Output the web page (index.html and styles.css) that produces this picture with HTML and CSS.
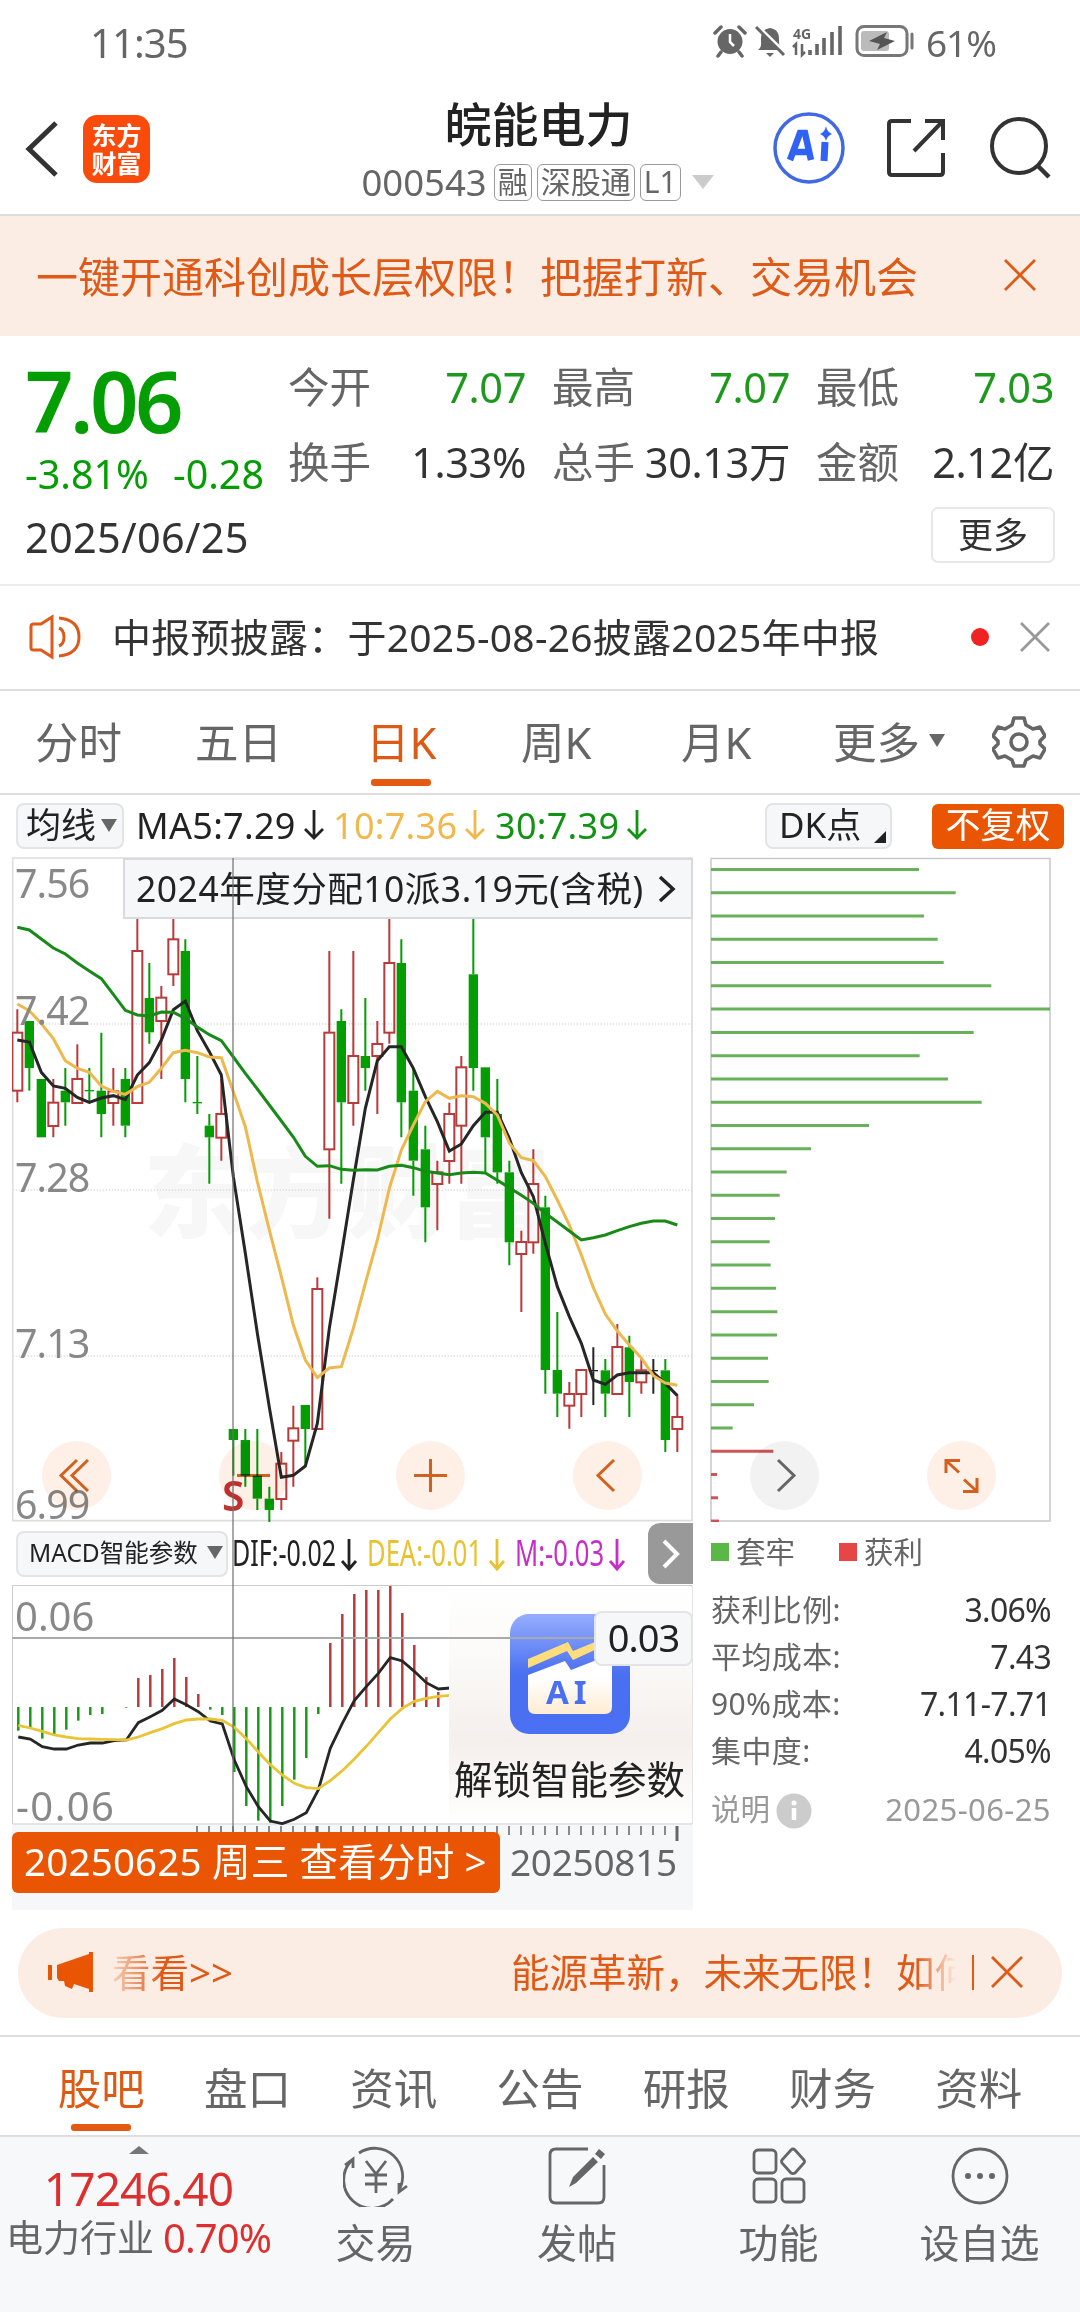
FILE: index.html
```html
<!DOCTYPE html>
<html lang="zh-CN">
<head>
<meta charset="utf-8">
<title>皖能电力 000543</title>
<link rel="stylesheet" href="styles.css">
</head>
<body>
<div class="status">
  <span class="time">11:35</span>
  <div class="status-right">
    <svg width="36" height="34" viewBox="0 0 36 34"><circle cx="18" cy="17.500" r="12.500" fill="#666"/><path d="M18 10v8l4 4" fill="none" stroke="#fff" stroke-width="2.500"/><path d="M3 9l6-6M33 9l-6-6M9 28l-3 4M27 28l3 4" stroke="#666" stroke-width="3.500" stroke-linecap="round"/></svg>
    <svg width="34" height="34" viewBox="0 0 34 34"><path d="M5 26c4-3 3-6 3-11 0-7 3-10 9-11 6 1 9 4 9 11 0 5 0 8 4 11z" fill="#666"/><path d="M13 29h8l-4 4z" fill="#666"/><path d="M5 3l28 27" stroke="#fff" stroke-width="4"/><path d="M3 3l28 28" stroke="#666" stroke-width="3"/></svg>
    <svg width="52" height="34" viewBox="0 0 52 34"><text x="1" y="15" class="net">4G</text><path d="M4 31V20l-3 3M10 20v11l3-3" fill="none" stroke="#666" stroke-width="2.500"/><path d="M18 31v-5M25 31V20M32 31V14M40 31V8M48 31V2" stroke="#666" stroke-width="3.600"/></svg>
    <svg class="battery" width="60" height="34" viewBox="0 0 60 34"><rect x="2" y="2.500" width="50" height="29" rx="7" fill="none" stroke="#777" stroke-width="3"/><rect x="6" y="7" width="28" height="20" rx="3" fill="#bbb"/><path d="M32 8L14 17l11 3-3 6 18-9-11-3z" fill="#555"/><path d="M57 10v14" stroke="#777" stroke-width="3" stroke-linecap="round"/></svg>
    <span class="pct">61%</span>
  </div>
</div>

<header class="header">
  <div class="head-left">
    <svg width="36" height="60" viewBox="0 0 36 60"><path d="M33 4L6 30l27 26" fill="none" stroke="#333" stroke-width="5"/></svg>
    <div class="brand"><span>东方</span><span>财富</span></div>
  </div>
  <div class="head-mid">
    <h1>皖能电力</h1>
    <div class="code"><span class="num">000543</span><span class="tag">融</span><span class="tag">深股通</span><span class="tag">L1</span><i class="tri light"></i></div>
  </div>
  <div class="head-right">
    <svg width="74" height="74" viewBox="0 0 74 74"><circle cx="37" cy="37" r="34" fill="#fff" stroke="#4169e1" stroke-width="3.500"/><path d="M18 49L28 22h5l6 27M22 41h15" fill="none" stroke="#2f62f5" stroke-width="6.500"/><path d="M53 31l-1 19" stroke="#2f62f5" stroke-width="7"/><path d="M54 15q1 6 6 8-5 2-6 7-1-5-6-7 5-2 6-8z" fill="#2f62f5"/></svg>
    <svg width="62" height="62" viewBox="0 0 62 62"><path d="M25 4H6q-3 0-3 3v48q0 3 3 3h48q3 0 3-3V36M39 4h18v19M57 4L28 34" fill="none" stroke="#333" stroke-width="4"/></svg>
    <svg width="64" height="64" viewBox="0 0 64 64"><circle cx="31" cy="30" r="27" fill="none" stroke="#333" stroke-width="4"/><path d="M49 49l12 12" stroke="#333" stroke-width="4.500"/></svg>
  </div>
</header>

<div class="promo">
  <span>一键开通科创成长层权限！把握打新、交易机会</span>
  <svg width="34" height="34" viewBox="0 0 34 34"><path d="M2 2l30 30M32 2L2 32" stroke="#df5a17" stroke-width="2.800"/></svg>
</div>

<section class="quote">
  <div class="price">
    <div class="last">7.06</div>
    <div class="chg"><span>-3.81%</span><span>-0.28</span></div>
  </div>
  <dl class="stats">
    <div><dt>今开</dt><dd class="down">7.07</dd></div>
    <div><dt>最高</dt><dd class="down">7.07</dd></div>
    <div><dt>最低</dt><dd class="down">7.03</dd></div>
    <div><dt>换手</dt><dd>1.33%</dd></div>
    <div><dt>总手</dt><dd>30.13万</dd></div>
    <div><dt>金额</dt><dd>2.12亿</dd></div>
  </dl>
  <div class="quote-foot"><span class="date">2025/06/25</span><span class="more">更多</span></div>
</section>

<div class="notice">
  <svg width="54" height="46" viewBox="0 0 54 46"><path d="M3 12q0-2 3-2h7L24 3v40L13 36H6q-3 0-3-2z" fill="none" stroke="#dd5a1b" stroke-width="3"/><path d="M31 14q5 2 5 9t-5 9M31 4q20 2 20 19T31 42" fill="none" stroke="#dd5a1b" stroke-width="3"/></svg>
  <span class="notice-text">中报预披露：于2025-08-26披露2025年中报</span>
  <i class="dot"></i>
  <svg width="32" height="32" viewBox="0 0 32 32"><path d="M2 2l28 28M30 2L2 30" stroke="#999" stroke-width="2.800"/></svg>
</div>

<nav class="periods">
  <span>分时</span><span>五日</span><span><b class="on">日K</b></span><span>周K</span><span>月K</span><span>更多<i class="tri"></i></span>
  <svg width="54" height="54" viewBox="0 0 54 54"><path d="M22 3h10l2 7 7 4 7-2 5 9-5 5v3l5 5-5 9-7-2-7 4-2 6H22l-2-6-7-4-7 2-5-9 5-5v-3l-5-5 5-9 7 2 7-4z" fill="none" stroke="#666" stroke-width="3.600" stroke-linejoin="round"/><circle cx="27" cy="27" r="8" fill="none" stroke="#666" stroke-width="3.600"/></svg>
</nav>

<div class="ma">
  <span class="chip avg">均线<i class="tri"></i></span>
  <span class="val v5">MA5:7.29<svg class="arr" viewBox="0 0 20 32"><path d="M10 1v28M1 20l9 9 9-9"/></svg></span>
  <span class="val v10">10:7.36<svg class="arr" viewBox="0 0 20 32"><path d="M10 1v28M1 20l9 9 9-9"/></svg></span>
  <span class="val v30">30:7.39<svg class="arr" viewBox="0 0 20 32"><path d="M10 1v28M1 20l9 9 9-9"/></svg></span>
  <span class="chip dk">DK点<i class="corner"></i></span>
  <span class="adj">不复权</span>
</div>

<main class="charts">
  <div class="left">
    <div class="kline">
      <svg width="681" height="665" viewBox="36 51 2043 1995">
        <text class="mark" x="430" y="1170">东方财富</text>
        <g class="grid"><path d="M38 552H2076M38 1050H2076M38 1548H2076"/></g>
        <path class="frame" d="M38 54H2076V2042H38Z"/>
        <g id="candles"></g>
        <g id="averages"></g>
        <text class="sell" x="666" y="2013">S</text>
        <g class="ylab"><text x="45" y="173" textLength="226">7.56</text><text x="45" y="556" textLength="226">7.42</text><text x="45" y="1055" textLength="226">7.28</text><text x="45" y="1553" textLength="226">7.13</text><text x="45" y="2038" textLength="226">6.99</text></g>
      </svg>
      <div class="event"><span>2024年度分配10派3.19元(含税)</span><svg width="18" height="28" viewBox="0 0 18 28"><path d="M2 2l13 12L2 26" fill="none" stroke="#222" stroke-width="3.500"/></svg></div>
    </div>
    <div class="macd-head">
      <span class="chip">MACD智能参数<i class="tri"></i></span>
      <svg class="readout" width="400" height="46" viewBox="0 0 400 46">
        <g fill="#222" stroke="#222"><text x="0" y="36" textLength="104" lengthAdjust="spacingAndGlyphs">DIF:-0.02</text><path d="M117 9v30M110 31l7 8 7-8"/></g>
        <g fill="#e8c230" stroke="#e8c230"><text x="135" y="36" textLength="115" lengthAdjust="spacingAndGlyphs">DEA:-0.01</text><path d="M265 9v30M258 31l7 8 7-8"/></g>
        <g fill="#c52fc5" stroke="#c52fc5"><text x="283" y="36" textLength="89" lengthAdjust="spacingAndGlyphs">M:-0.03</text><path d="M385 9v30M378 31l7 8 7-8"/></g>
      </svg>
      <span class="next"><svg width="20" height="30" viewBox="0 0 20 30"><path d="M3 2l13 13L3 28" fill="none" stroke="#fff" stroke-width="4"/></svg></span>
    </div>
    <div class="macd">
      <svg width="681" height="240" viewBox="12 1585 681 240">
        <path d="M12.500 1585.500H692V1824H12.500Z" fill="none" stroke="#ccc"/>
        <g id="macd"></g>
        <g class="ylab small"><text x="15" y="1631">0.06</text><text x="16" y="1821" textLength="98">-0.06</text></g>
      </svg>
      <div class="unlock">
        <svg width="120" height="120" viewBox="0 0 120 120">
          <defs><linearGradient id="bg" x1="0" y1="0" x2="0" y2="1"><stop offset="0" stop-color="#95aeff"/><stop offset=".5" stop-color="#4a6ff0"/><stop offset="1" stop-color="#4a70f3"/></linearGradient><linearGradient id="card" x1="0" y1="0" x2="0" y2="1"><stop offset=".4" stop-color="#fff"/><stop offset="1" stop-color="#ffecd2"/></linearGradient></defs>
          <rect width="120" height="120" rx="19" fill="url(#bg)"/>
          <path d="M18 45L58 28l5 9 39-16v7L63 46l-6-9-39 17z" fill="#ffdc7c"/>
          <path d="M18 61l37-14 6 9 41-16v53q0 7-7 7H25q-7 0-7-7z" fill="url(#card)"/>
          <text x="36" y="90" class="ai">AI</text>
        </svg>
        <span>解锁智能参数</span>
      </div>
      <i class="cross-h"></i>
      <span class="level">0.03</span>
    </div>
    <div class="axis">
      <svg width="681" height="18" viewBox="12 1825 681 18"><g id="ticks"></g></svg>
      <div class="axis-row"><span class="day">20250625 周三 查看分时 &gt;</span><span class="end">20250815</span></div>
    </div>
    <i class="cross-v"></i>
  </div>
  <div class="right">
    <svg width="341" height="665" viewBox="710 857 341 665">
      <path d="M711 858.500H1050V1521H711Z" fill="none" stroke="#c8c8c8" stroke-width="1.500"/>
      <g id="chips"></g>
    </svg>
    <div class="legend"><i class="sq g"></i><span>套牢</span><i class="sq r"></i><span>获利</span></div>
    <ul class="facts">
      <li><span>获利比例:</span><b>3.06%</b></li>
      <li><span>平均成本:</span><b>7.43</b></li>
      <li><span>90%成本:</span><b>7.11-7.71</b></li>
      <li><span>集中度:</span><b>4.05%</b></li>
    </ul>
    <div class="explain"><span>说明</span><svg width="36" height="36" viewBox="0 0 36 36"><circle cx="18" cy="18" r="17.500" fill="#ccc"/><circle cx="18" cy="10" r="2.500" fill="#fff"/><path d="M18 15v12" stroke="#fff" stroke-width="4.500"/></svg><b>2025-06-25</b></div>
  </div>
  <div class="tools">
    <svg viewBox="0 0 69 69"><circle cx="34.500" cy="34.500" r="34.500" fill="#feefe7"/><path d="M35 19L19 34.500 35 50M46 19L30 34.500 46 50" class="ic"/></svg>
    <svg viewBox="0 0 69 69"><circle cx="34.500" cy="34.500" r="34.500" fill="#feefe7"/><path d="M18 34.500h33" class="ic"/></svg>
    <svg viewBox="0 0 69 69"><circle cx="34.500" cy="34.500" r="34.500" fill="#feefe7"/><path d="M18 34.500h33M34.500 18v33" class="ic"/></svg>
    <svg viewBox="0 0 69 69"><circle cx="34.500" cy="34.500" r="34.500" fill="#feefe7"/><path d="M41 19L25 34.500 41 50" class="ic"/></svg>
    <svg viewBox="0 0 69 69"><circle cx="34.500" cy="34.500" r="34.500" fill="#f2f2f2"/><path d="M28 19l16 15.500L28 50" class="ic gray"/></svg>
    <svg viewBox="0 0 69 69"><circle cx="34.500" cy="34.500" r="34.500" fill="#feefe7"/><path d="M19 32V19.500h14M19 19.500l13 12M36 50.500h14V37M50 50.500l-13-12" class="ic"/></svg>
  </div>
</main>

<div class="ticker">
  <svg width="46" height="40" viewBox="0 0 46 40"><path d="M2 13v15" stroke="#ea5504" stroke-width="4"/><path d="M9 13L41 2V0h4v40h-4v-3L26 32l-2 5-7-3-1-5H11l-2-3z" fill="#ea5504"/></svg>
  <div class="roll"><span>看看&gt;&gt;</span><span>能源革新，未来无限！如何</span></div>
  <i class="bar"></i>
  <svg width="34" height="34" viewBox="0 0 34 34"><path d="M2 2l30 30M32 2L2 32" stroke="#df5a17" stroke-width="2.800"/></svg>
</div>

<nav class="sections"><span class="on">股吧</span><span>盘口</span><span>资讯</span><span>公告</span><span>研报</span><span>财务</span><span>资料</span></nav>

<footer class="dock">
  <div class="sector"><i class="up"></i><span class="idx">17246.40</span><span class="name">电力行业<em>0.70%</em></span></div>
  <div class="act"><svg width="66" height="62" viewBox="0 0 66 62"><path d="M16 8A28 28 0 0 1 56 45M50 54A28 28 0 0 1 8 16M2 20l8-6v9M64 41l-8 6v-9M23 16l10 13 10-13M33 29v19M22 30h22M22 39h22" class="line"/></svg><span>交易</span></div>
  <div class="act"><svg width="66" height="62" viewBox="0 0 66 62"><path d="M44 4H12q-6 0-6 6v42q0 6 6 6h42q6 0 6-6V20" class="line"/><path d="M25 42l4-10L49 12l5 5-22 21zM51 9l4-5 6 5-4 5z" fill="#666"/></svg><span>发帖</span></div>
  <div class="act"><svg width="66" height="62" viewBox="0 0 66 62"><rect x="8" y="5" width="22" height="23" rx="4" class="line"/><rect x="8" y="34" width="22" height="23" rx="4" class="line"/><rect x="36" y="34" width="22" height="23" rx="4" class="line"/><path d="M47 4q1 0 2 1l9 10q1 1 0 3l-9 10q-2 1-4 0l-9-10q-1-2 0-3l9-10q1-1 2-1z" class="line"/></svg><span>功能</span></div>
  <div class="act"><svg width="66" height="62" viewBox="0 0 66 62"><circle cx="33" cy="31" r="27" class="line"/><circle cx="21" cy="31" r="3" fill="#666"/><circle cx="33" cy="31" r="3" fill="#666"/><circle cx="45" cy="31" r="3" fill="#666"/></svg><span>设自选</span></div>
</footer>
<script src="script.js"></script>
</body>
</html>
```
FILE: styles.css
```css
* { box-sizing: border-box; margin: 0; padding: 0; }
body { width: 1080px; height: 2312px; overflow: hidden; background: #fff; color: #333; font-family: "Noto Sans", "Noto Sans CJK SC", sans-serif; display: flex; flex-direction: column; white-space: nowrap; }
body > * { flex: none; }
svg { display: block; flex: none; }
i, em { font-style: normal; }
ul { list-style: none; }

.tri { display: inline-block; border: 8px solid transparent; border-top: 13px solid #666; border-bottom: 0; }
.tri.light { border-width: 14px 11px 0; border-top-color: #ccc; }

.status { height: 90px; padding: 2px 84px 0 90px; display: flex; align-items: flex-start; justify-content: space-between; color: #666; }
.time { font-size: 40px; line-height: 82px; letter-spacing: -.9px; }
.status-right { display: flex; align-items: center; gap: 5px; height: 78px; }
.status-right .battery { margin-left: 6px; }
.pct { font-size: 37px; margin-left: 6px; line-height: 78px; letter-spacing: -1px; margin-top: 4px; }
.net { font: bold 14px "Noto Sans", sans-serif; fill: #666; }

.header { height: 126px; padding: 0 28px 0 23px; display: grid; grid-template-columns: 1fr auto 1fr; border-bottom: 2px solid #dcdddf; }
.head-left { display: flex; align-items: center; gap: 24px; padding: 3px 0 9px; }
.brand { width: 67px; height: 68px; border-radius: 14px; background: #fb4b0c; color: #fff; font-size: 25px; font-weight: 700; line-height: 28px; display: flex; flex-direction: column; align-items: center; justify-content: center; }
.head-mid { display: flex; flex-direction: column; align-items: center; padding-top: 1px; }
.head-mid h1 { font-size: 47px; font-weight: 500; line-height: 66px; color: #222; margin-left: 2px; }
.code { display: flex; align-items: center; height: 50px; color: #666; }
.code .num { font-size: 36.500px; margin-right: 7px; }
.tag { border: 1.500px solid #999; border-radius: 6px; font-size: 30px; line-height: 34px; height: 37px; padding: 0 3px; margin-right: 5px; }
.code .tri { margin-left: 6px; }
.head-right { display: flex; align-items: center; justify-content: flex-end; gap: 40px; padding-bottom: 8px; }

.promo { height: 120px; background: #fcede4; color: #df5a17; padding: 0 43px 3px 36px; display: flex; align-items: center; justify-content: space-between; font-size: 42px; }

.quote { height: 250px; padding: 18px 25px 0 25px; display: grid; grid-template-columns: 263px 1fr; grid-template-rows: 148px 64px; border-bottom: 2px solid #ececec; }
.price { color: #049d04; }
.last { font-size: 85px; font-weight: 600; line-height: 92px; letter-spacing: -3.600px; }
.chg { font-size: 39.500px; line-height: 56px; display: flex; justify-content: space-between; padding-right: 24px; letter-spacing: 0; }
.stats { display: grid; grid-template-columns: 238px 238px 238px; column-gap: 26px; grid-auto-rows: 75px; padding-top: 1px; font-size: 41.500px; }
.stats div { display: flex; justify-content: space-between; line-height: 64px; }
.stats dt { color: #666; }
.stats dd { letter-spacing: -.4px; }
.stats .down { color: #1d9a1d; }
.quote-foot { grid-column: 1 / 3; display: flex; justify-content: space-between; align-items: flex-start; padding-top: 5px; }
.date { font-size: 41.500px; line-height: 60px; letter-spacing: .3px; }
.more { width: 124px; height: 56px; border: 2px solid #e6e8ea; border-radius: 7px; font-size: 35px; line-height: 51px; text-align: center; }

.notice { height: 105px; border-bottom: 2px solid #dcdddf; display: flex; align-items: center; padding: 0 29px 1px 28px; }
.notice-text { flex: 1; margin: -4px 0 0 30px; font-size: 39px; letter-spacing: .25px; }
.dot { width: 18px; height: 18px; border-radius: 9px; background: #f02222; margin-right: 30px; }

.periods { height: 104px; border-bottom: 2px solid #dcdddf; display: grid; grid-template-columns: 160px 171px 155px 160px 152px 1fr 54px; align-items: center; padding: 0 34px 0 35px; font-size: 43.500px; color: #666; }
.periods span { line-height: 102px; }
.periods b { font-weight: 400; position: relative; display: inline-block; height: 102px; }
.periods .tri { margin-left: 9px; vertical-align: 12px; }
.on { color: #dc5a14; }
.on::after { content: ""; position: absolute; left: 50%; margin-left: -30px; bottom: 7px; width: 60px; height: 7px; border-radius: 3px; background: #e55a12; }

.ma { height: 62px; display: flex; align-items: center; padding: 0 16px; font-size: 35px; }
.chip { background: #f6f7f9; border: 2px solid #e2e4e8; border-radius: 8px; height: 46px; line-height: 40px; display: inline-flex; align-items: center; color: #222; position: relative; padding-bottom: 2px; }
.avg { width: 108px; padding-left: 8px; gap: 5px; }
.val { display: inline-flex; align-items: center; gap: 8px; letter-spacing: .3px; font-size: 36px; margin-top: -2px; }
.v5 { margin-left: 12px; width: 197px; color: #222; }
.v10 { width: 162px; color: #f2b84b; }
.v30 { color: #139313; }
.arr { width: 20px; height: 32px; fill: none; stroke: currentColor; stroke-width: 2.800; }
.dk { margin-left: auto; width: 127px; padding-left: 12px; margin-right: 40px; }
.corner { position: absolute; right: 4px; bottom: 4px; border: 6px solid #222; border-top-color: transparent; border-left-color: transparent; }
.adj { background: #ea5504; color: #fff; border-radius: 6px; width: 132px; height: 45px; line-height: 42px; text-align: center; }

.charts { position: relative; height: 1053px; padding-left: 12px; display: grid; grid-template-columns: 681px 341px; column-gap: 17px; }
.left { position: relative; }
.kline, .macd { position: relative; }
.frame { fill: none; stroke: #ddd; stroke-width: 5; }
.grid { stroke: #ddd; stroke-width: 4; stroke-dasharray: 4 5; }
.mark { font: 900 305px "Noto Sans CJK SC", sans-serif; fill: #f7f7f7; }
.ylab { font-size: 118px; fill: #888; }
.small { font-size: 40px; }
.sell { font-size: 122px; font-weight: 600; fill: #c03232; }
.event { position: absolute; left: 111px; top: 1px; width: 570px; height: 61px; background: #f6f7f9; border: 2px solid #d8dadf; display: flex; align-items: center; justify-content: space-between; padding: 0 15px 0 11px; font-size: 35.500px; color: #222; letter-spacing: .5px; }
.event span { margin-top: -4px; }
.macd-head { height: 63px; display: flex; align-items: center; padding-left: 4px; }
.macd-head .chip { width: 212px; padding-left: 11px; gap: 9px; font-size: 24.500px; }
.readout { margin: 0 0 2px 4px; font-size: 37px; }
.readout text { stroke: none; }
.readout path { fill: none; stroke-width: 2.800; }
.next { margin-left: auto; width: 45px; height: 61px; border-radius: 12px 0 0 12px; background: #999; display: flex; align-items: center; justify-content: center; }
.unlock { position: absolute; left: 437px; top: 2px; width: 243px; height: 236px; padding: 27px 2px 0 0; display: flex; flex-direction: column; align-items: center; background: linear-gradient(#fff 0, #fbfaf8 30%, #f5efec 65%, #fff 100%); font-size: 38.500px; color: #222; line-height: 91px; }
.ai { font: 700 33px "Noto Sans", sans-serif; fill: #4a6ff0; letter-spacing: 5px; }
.cross-h { position: absolute; left: 0; top: 52px; width: 582px; height: 2px; background: #aaa; }
.level { position: absolute; right: 0; top: 26px; width: 99px; height: 55px; border: 2px solid #e2e4e8; border-radius: 8px; background: #f6f7f9; font-size: 38px; line-height: 49px; text-align: center; color: #222; letter-spacing: -1px; }
.axis { height: 85px; background: #f6f7f9; position: relative; }
.axis-row { position: absolute; left: 0; top: 7px; width: 681px; display: flex; align-items: center; }
.day { width: 488px; height: 61px; border-radius: 6px; background: #ea5504; color: #fff; font-size: 38.500px; line-height: 59px; padding-left: 12px; letter-spacing: .2px; }
.end { font-size: 37px; margin-left: 10px; color: #666; letter-spacing: -.3px; margin-top: -2px; }
.cross-v { position: absolute; left: 220px; top: 1px; width: 2px; height: 974px; background: rgba(110,110,110,.6); }

.legend { display: flex; align-items: center; height: 60px; font-size: 29.500px; color: #666; }
.legend span { margin-top: -3px; }
.sq { width: 18px; height: 18px; margin-right: 7px; }
.sq.g { background: #5ab946; margin-left: 1px; }
.sq.r { background: #e64646; margin-left: 44px; }
.facts { padding-top: 4px; }
.facts li { height: 47px; line-height: 47px; display: flex; justify-content: space-between; font-size: 30px; color: #666; }
.facts span { padding-left: 1px; letter-spacing: .4px; }
.facts b { font-weight: 400; font-size: 32px; color: #333; letter-spacing: -.7px; }
.explain { margin-top: 18px; height: 38px; line-height: 34px; display: flex; align-items: center; gap: 6px; color: #999; font-size: 29.500px; padding-left: 1px; }
.explain span, .explain b { margin-top: -4px; }
.explain b { font-weight: 400; margin-left: auto; font-size: 31px; letter-spacing: .4px; }

.tools { position: absolute; left: 42px; top: 584px; display: flex; gap: 108px; mix-blend-mode: multiply; }
.tools svg { width: 69px; height: 69px; }
.ic { fill: none; stroke: #d2601e; stroke-width: 3; }
.ic.gray { stroke: #666; }

.ticker { margin: 18px 18px 17px; height: 90px; border-radius: 45px; background: #fcede4; display: flex; align-items: center; padding: 0 38px 2px 30px; font-size: 38.500px; color: #df5a17; }
.roll { margin: -4px 0 0 18px; width: 847px; overflow: hidden; display: flex; gap: 278px; -webkit-mask-image: linear-gradient(90deg, rgba(0,0,0,.2), #000 50px, #000 805px, transparent); }
.bar { width: 2px; height: 35px; background: #df5a17; margin: 0 16px 0 16px; }

.sections { height: 102px; border-top: 2px solid #dcdddf; border-bottom: 2px solid #dcdddf; padding: 0 28px; display: grid; grid-template-columns: repeat(7, 1fr); text-align: center; font-size: 43.500px; line-height: 103px; color: #666; }
.sections span { position: relative; height: 98px; }
.sections .on { color: #dc5a14; }
.sections .on::after { bottom: 4px; }

.dock { flex: 1; background: #f7f8fa; display: grid; grid-template-columns: 275px 201px 202px 201px 201px; color: #666; }
.sector { display: flex; flex-direction: column; align-items: center; padding-left: 2px; }
.up { border: 10px solid transparent; border-top: 0; border-bottom: 8px solid #777; margin-top: 9px; }
.idx { font-size: 46px; line-height: 64px; color: #dc3030; letter-spacing: -.9px; margin-top: 2px; }
.name { font-size: 37px; line-height: 36px; display: flex; gap: 9px; }
.name em { font-size: 40px; color: #dc3030; letter-spacing: -.9px; }
.act { display: flex; flex-direction: column; align-items: center; padding-top: 8px; font-size: 40px; }
.act span { line-height: 72px; }
.line { fill: none; stroke: #666; stroke-width: 2.800; }
```
FILE: script.js
```js
const RED = '#b93a3a', GREEN = '#049d04', BLACK = '#262626';

// [kind, high, body top, body bottom, low] in thirds of a pixel
const candles = [
  ['r',508,578,752,787],['g',543,543,684,752],['g',717,717,892,892],['r',717,788,858,892],
  ['g',684,752,787,857],['r',613,717,789,789],['g',684,750,754,787],['g',578,752,822,892],
  ['r',684,754,789,857],['g',684,717,857,892],['r',237,333,789,789],['g',369,474,577,611],
  ['r',438,473,543,717],['r',237,298,403,438],['g',298,333,717,787],['g',648,786,790,822],
  ['g',822,857,892,1031],['r',717,822,893,962],['g',1767,1767,1800,1907],['g',1767,1800,1907,1940],
  ['g',1767,1907,1976,2010],['g',1940,1976,2010,2046],['r',1836,1871,1977,2010],['r',1697,1765,1802,1940],
  ['g',1695,1695,1767,1870],['r',1312,1347,1767,1767],['r',333,578,928,1136],['g',508,543,787,1031],
  ['r',333,648,789,857],['g',474,648,684,752],['r',543,612,648,822],['r',237,369,578,611],
  ['g',298,369,787,892],['g',684,752,962,1067],['g',857,928,1102,1207],['r',962,997,1032,1171],
  ['r',788,822,963,1031],['r',648,682,857,1031],['g',237,403,684,752],['g',682,682,892,997],
  ['g',717,822,997,1031],['g',962,997,1207,1276],['r',1172,1206,1242,1416],['r',928,1032,1207,1241],
  ['g',1067,1102,1590,1661],['g',1416,1590,1661,1731],['r',1626,1662,1697,1766],['r',1590,1590,1662,1731],
  ['k',1522,1590,1594,1695],['g',1557,1591,1661,1731],['r',1452,1521,1662,1662],['g',1487,1522,1626,1731],
  ['r',1557,1591,1627,1661],['k',1557,1590,1594,1661],['g',1557,1591,1800,1836],['r',1665,1731,1767,1836]
];
const ma5 = [600,606,697,738,745,772,787,774,767,779,705,668,600,509,483,572,635,705,1010,1240,1480,1702,1912,1906,1878,1750,1465,1245,1020,805,662,620,620,685,770,845,933,912,857,817,817,895,998,1070,1210,1340,1430,1510,1620,1633,1605,1598,1598,1598,1630,1667];
const ma10 = [492,512,551,596,662,685,697,738,754,763,740,727,685,638,631,638,651,653,755,860,1025,1170,1310,1455,1560,1613,1584,1580,1465,1330,1200,1045,930,855,785,754,775,767,770,790,825,910,953,962,1010,1080,1155,1245,1343,1422,1473,1515,1554,1607,1629,1636];
const ma30 = [262,270,297,324,342,369,393,416,463,511,525,528,516,517,535,561,584,602,651,700,747,795,843,891,949,979,977,988,991,989,990,979,976,983,994,999,1004,999,997,999,1021,1043,1066,1090,1120,1146,1173,1200,1193,1185,1172,1160,1150,1143,1143,1155];

const put = (id, html) => { document.getElementById(id).innerHTML = html; };
const line = (pts, color, w) => `<polyline points="${pts.join(' ')}" fill="none" stroke="${color}" stroke-width="${w}"/>`;

put('candles', candles.map(([k, h, t, b, l], i) => {
  const x = 52 + 36 * i;
  const c = k === 'r' ? RED : k === 'g' ? GREEN : BLACK;
  const body = k === 'r'
    ? `<rect x="${x - 15}" y="${t}" width="30" height="${b - t}" fill="none" stroke="${c}" stroke-width="6"/>`
    : `<rect x="${x - 14}" y="${t}" width="28" height="${b - t}" fill="${c}"/>`;
  return `<path d="M${x} ${h}V${t}M${x} ${b}V${l}" stroke="${c}" stroke-width="6"/>${body}`;
}).join(''));

const series = v => v.map((y, i) => `${52 + 36 * i},${y}`);
put('averages', line(series(ma5), BLACK, 9) + line(series(ma10), '#edb94f', 9) + line(series(ma30), '#178a17', 9));

// Histogram ends and the two lines, in thirds of a pixel below y = 1510
const hist = [662,657,686,677,659,632,615,612,591,593,504,495,477,444,501,552,599,615,786,888,932,938,888,809,744,612,399,312,252,240,240,228,309,405,501,546,560];
const dif = [681,687,710,717,717,705,699,699,692,690,638,620,601,567,584,605,633,642,750,830,890,933,941,928,908,840,715,640,572,530,490,443,453,484,518,537,534];
const dea = [646,654,664,675,681,686,687,688,689,690,681,668,656,641,630,627,627,631,652,686,726,764,795,820,833,836,812,782,747,709,668,627,595,574,565,559,556];
const at = v => v.map((y, i) => `${18.3 + 12 * i},${1510 + y / 3}`);
put('macd', hist.map((y, i) => `<path d="M${18.3 + 12 * i} 1707V${1510 + y / 3}" stroke="${y < 591 ? RED : '#189a18'}" stroke-width="2.5"/>`).join('')
  + line(at(dif), BLACK, 2.8) + line(at(dea), '#e9c437', 2.8));

let ticks = '';
for (let x = 197; x < 680; x += 12) {
  const end = x === 677;
  ticks += `<path d="M${x} 1826v${end ? 15 : 9}" stroke="#666" stroke-width="${end || x === 317 ? 3 : 1.5}"/>`;
}
put('ticks', ticks);

const ends = [687,797,702,743,761,904,1080,851,689,774,875,537,363,290,269,255,239,242,258,262,261,234,236,192,128,250,81,84,87];
put('chips', ends.map((e, i) => `<path d="M711 ${869.5 + 23.27 * i}h${(e - 63) / 3}" stroke="${i < 25 ? '#69b05a' : '#cd5555'}" stroke-width="3"/>`).join(''));
```
